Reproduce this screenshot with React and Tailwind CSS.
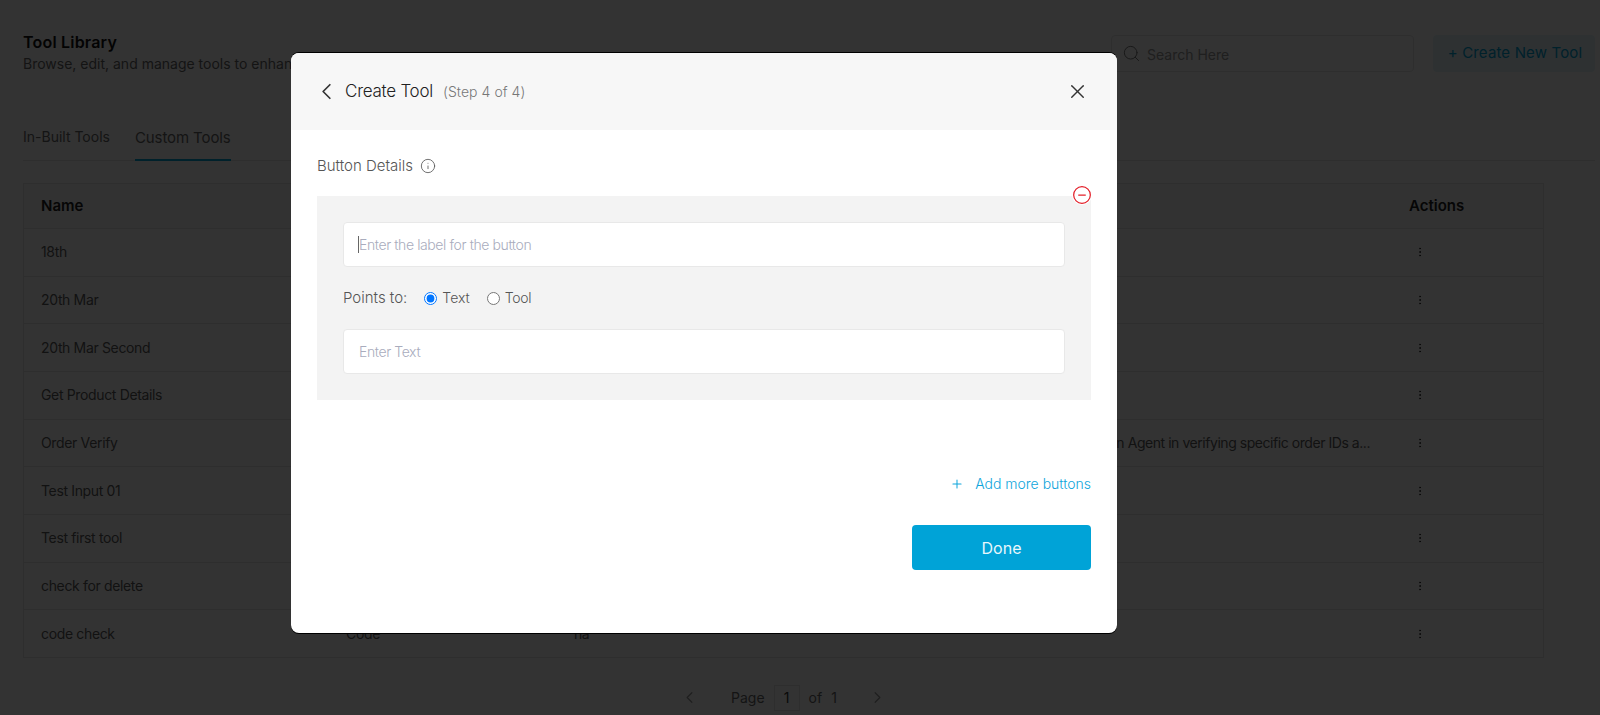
import React from "react";
import { ChevronLeft, ChevronRight, X, Info, Search, Plus, CircleMinus, EllipsisVertical } from "lucide-react";

const rows = [
  { name: "18th" },
  { name: "20th Mar" },
  { name: "20th Mar Second" },
  { name: "Get Product Details" },
  { name: "Order Verify", description: "Assists an Agent in verifying specific order IDs a..." },
  { name: "Test Input 01" },
  { name: "Test first tool" },
  { name: "check for delete" },
  { name: "code check", type: "Code", description: "na", left: true },
];

const ToolRow = ({ row }) => (
  <div className="flex items-center h-[47.67px] border-t border-[#e5e5e5] text-sm text-[#5c5c5c] tracking-[-0.35px]">
    <div className="w-[322px] pl-[17px] shrink-0">{row.name}</div>
    <div className="w-[228px] shrink-0">{row.type}</div>
    <div className={`w-[796px] shrink-0 whitespace-nowrap tracking-[-0.45px] ${row.left ? "" : "text-right"}`}>{row.description}</div>
    <div className="w-[175px] pl-[44px] shrink-0">
      <EllipsisVertical size={12} strokeWidth={2} className="text-[#333]" />
    </div>
  </div>
);

export default function App() {
  return (
    <div className="relative h-[715px] overflow-hidden bg-white font-['Inter',sans-serif]">
      {/* Page behind the modal */}
      <div className="flex items-start justify-between pl-[23px] pr-[5px] pt-[33px]">
        <div>
          <h1 className="text-base font-semibold leading-[18px] tracking-[0.2px] text-[#111]">Tool Library</h1>
          <p className="mt-[3px] text-sm leading-[20px] text-[#666]">Browse, edit, and manage tools to enhance</p>
        </div>
        <div className="flex items-center gap-[19px] pt-[2px]">
          <div className="flex items-center gap-[6px] w-[303px] h-[37px] px-[10px] border border-[#e5e5e5] rounded">
            <Search size={19} strokeWidth={1.25} className="text-[#777]" />
            <span className="text-sm leading-[22px] pt-[2px] text-[#999]">Search Here</span>
          </div>
          <button className="w-[162px] h-[37px] pl-[2px] rounded bg-[#e4f5fb] text-[#00a3d7] text-[15px] tracking-[0.15px]">+ Create New Tool</button>
        </div>
      </div>

      <div className="flex gap-[25px] ml-[23px] mr-[5px] mt-[46px] h-[41px] border-b border-[#e5e5e5] text-sm text-[#666]">
        <div className="pt-[7px]">In-Built Tools</div>
        <div className="h-[41px] pt-[7px] border-b-2 border-[#00a3d7] text-[15px] tracking-[-0.1px]">Custom Tools</div>
      </div>

      <div className="ml-[23px] mt-[22px] w-[1521px] border border-[#e5e5e5]">
        <div className="flex items-center h-[44px] bg-[#fafafa] text-[15px] font-semibold text-[#222]">
          <div className="w-[1346px] pl-[17px]">Name</div>
          <div className="pl-[39px]">Actions</div>
        </div>
        {rows.map((row) => (
          <ToolRow key={row.name} row={row} />
        ))}
      </div>

      <div className="flex items-center ml-[680px] mt-[27px] text-sm text-[#666]">
        <ChevronLeft size={19} strokeWidth={1.5} className="text-[#999]" />
        <span className="ml-[32px]">Page</span>
        <span className="flex items-center justify-center ml-[9px] w-[26px] h-[26px] border border-[#e5e5e5] text-[#333]">1</span>
        <span className="ml-[9px]">of</span>
        <span className="ml-[9px]">1</span>
        <ChevronRight size={19} strokeWidth={1.5} className="ml-[31px] text-[#999]" />
      </div>

      {/* Overlay and modal */}
      <div className="absolute inset-0 bg-black/80 pl-[291px] pt-[53px]">
        <div className="w-[826px] h-[580px] rounded-lg bg-white overflow-hidden shadow-[0_1px_0_#000,0_-1px_0_#000]">
          <div className="flex items-center justify-between h-[77px] pl-[22px] pr-[28px] bg-[#f7f7f7]">
            <div className="flex items-center">
              <ChevronLeft size={27} strokeWidth={1.5} className="text-[#333]" />
              <span className="ml-[5px] text-[17px] tracking-[-0.25px] font-light text-[#222]">Create Tool</span>
              <span className="ml-[10px] text-sm tracking-[0.05px] font-light text-[#777]">(Step 4 of 4)</span>
            </div>
            <X size={23} strokeWidth={1.5} className="text-[#333]" />
          </div>

          <div className="px-[26px]">
            <div className="flex items-center gap-[7px] mt-[26px] h-[20px] text-[15px] font-light text-[#555]">
              Button Details
              <Info size={16} strokeWidth={1.25} className="text-[#555]" />
            </div>

            <div className="relative mt-[20px] h-[204px] p-[26px] bg-[#f3f3f3]">
              <CircleMinus size={20} strokeWidth={1.5} className="absolute -top-[11px] -right-px text-[#e3202a] bg-white rounded-full" />
              <div className="relative">
                <input
                  placeholder="Enter the label for the button"
                  className="block w-full h-[45px] px-[15px] bg-white border border-[#e8e8e8] rounded text-sm tracking-[-0.4px] font-light outline-none placeholder:text-[#a9acbd]"
                />
                {/* text caret of the focused field */}
                <span className="absolute left-[15px] top-[14px] w-px h-[17px] bg-[#666]" />
              </div>
              <div className="flex items-center h-[62px] text-sm font-light text-[#555]">
                <span className="text-[15px]">Points to:</span>
                <label className="flex items-center gap-[5px] ml-[17px]">
                  <input type="radio" name="points" defaultChecked className="m-0" />
                  Text
                </label>
                <label className="flex items-center gap-[5px] ml-[17px] tracking-[-0.3px]">
                  <input type="radio" name="points" className="m-0" />
                  Tool
                </label>
              </div>
              <input
                placeholder="Enter Text"
                className="block w-full h-[45px] px-[15px] bg-white border border-[#e8e8e8] rounded text-sm tracking-[-0.4px] font-light outline-none placeholder:text-[#a9acbd]"
              />
            </div>

            <div className="flex items-center justify-end gap-[11px] mt-[74px] h-[20px] text-sm font-light text-[#0ea5dc]">
              <Plus size={14} strokeWidth={1.75} />
              <span>Add more buttons</span>
            </div>

            <div className="flex justify-end mt-[31px]">
              <button className="w-[179px] h-[45px] rounded bg-[#00a3d7] text-base text-[#e8f7fc]">Done</button>
            </div>
          </div>
        </div>
      </div>
    </div>
  );
}
